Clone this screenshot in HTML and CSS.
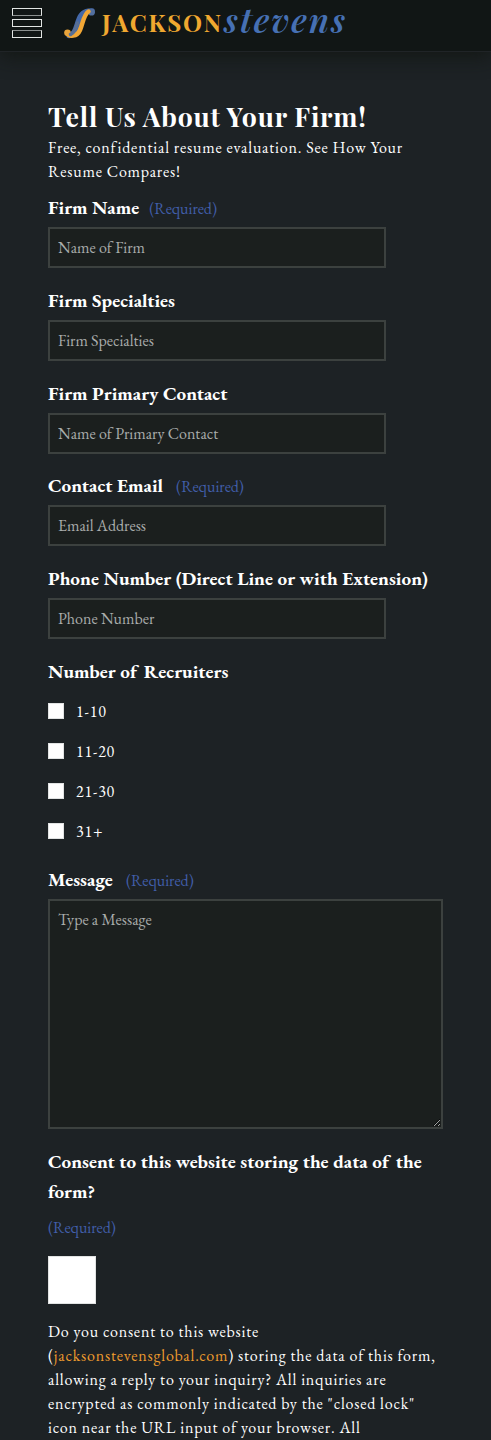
FILE: index.html
```html
<!DOCTYPE html>
<html lang="en">
<head>
<meta charset="utf-8">
<title>Jackson Stevens</title>
<link rel="stylesheet" href="styles.css">
</head>
<body>
<header class="header">
  <button class="menu" aria-label="Menu"><span class="bar"></span><span class="bar"></span><span class="bar"></span></button>
  <svg class="logo" width="300" height="48" viewBox="62 0 300 48" role="img" aria-label="Jackson Stevens">
    <path d="M69 35.500C75 35 76 28 78.500 21C80.500 14 84 10.500 92 11" fill="none" stroke="#4468a8" stroke-width="5.500" stroke-linecap="round"/>
    <circle cx="91.500" cy="12.200" r="3.400" fill="#526f9f"/>
    <path d="M67 33C69 37 77 37 80 30C83 23 83.500 15 88.500 11.500" fill="none" stroke="#f2a735" stroke-width="4.500" stroke-linecap="round"/>
    <circle cx="67.500" cy="32.800" r="3.300" fill="#e9a43b"/>
    <path d="M70.500 34.500C74.500 33 76 28 77.500 23" fill="none" stroke="#586f95" stroke-width="3.500" stroke-linecap="round"/>
    <text class="logo-first" x="102" y="32" textLength="119" lengthAdjust="spacing">JACKSON</text>
    <text class="logo-second" x="224" y="32.500" textLength="121" lengthAdjust="spacing">stevens</text>
  </svg>
</header>
<main class="content">
  <h1 class="title">Tell Us About Your Firm!</h1>
  <p class="copy intro">Free, confidential resume evaluation. See How Your<br>Resume Compares!</p>
  <form class="form">
    <div class="field">
      <label class="label" for="firm">Firm Name</label><span class="required near">(Required)</span>
      <input class="input" id="firm" placeholder="Name of Firm">
    </div>
    <div class="field">
      <label class="label" for="spec">Firm Specialties</label>
      <input class="input" id="spec" placeholder="Firm Specialties">
    </div>
    <div class="field">
      <label class="label" for="contact">Firm Primary Contact</label>
      <input class="input" id="contact" placeholder="Name of Primary Contact">
    </div>
    <div class="field">
      <label class="label" for="email">Contact Email</label><span class="required">(Required)</span>
      <input class="input" id="email" placeholder="Email Address">
    </div>
    <div class="field">
      <label class="label" for="phone">Phone Number (Direct Line or with Extension)</label>
      <input class="input" id="phone" placeholder="Phone Number">
    </div>
    <div class="group">
      <div class="label">Number <span class="gap">of</span> Recruiters</div>
      <label class="option"><input class="check" type="checkbox"><span class="option-text">1-10</span></label>
      <label class="option"><input class="check" type="checkbox"><span class="option-text">11-20</span></label>
      <label class="option"><input class="check" type="checkbox"><span class="option-text">21-30</span></label>
      <label class="option"><input class="check" type="checkbox"><span class="option-text">31+</span></label>
    </div>
    <div class="message">
      <label class="label" for="msg">Message</label><span class="required">(Required)</span>
      <textarea class="input area" id="msg" placeholder="Type a Message"></textarea>
    </div>
    <div class="label consent-title">Consent to this website storing the data <span class="gap">of</span> the<br>form?</div>
    <div class="required below">(Required)</div>
    <input class="check big" type="checkbox" aria-label="Consent">
    <p class="copy">Do you consent to this website<br>(<a class="link">jacksonstevensglobal.com</a>) storing the data of this form,<br>allowing a reply to your inquiry? All inquiries are<br>encrypted as commonly indicated by the "closed lock"<br>icon near the URL input of your browser. All</p>
  </form>
</main>
</body>
</html>
```
FILE: styles.css
```css
* { box-sizing: border-box; }
body {
  margin: 0;
  height: 1440px;
  overflow: hidden;
  background: #1d2225;
  color: #fff;
  font-family: "EB Garamond", "Liberation Serif", serif;
  font-size: 16px;
}
.header {
  display: flex;
  align-items: flex-start;
  height: 52px;
  padding-left: 12px;
  background: #111615;
  border-bottom: 1px solid #202427;
  box-shadow: 0 4px 20px rgba(16, 20, 15, .8);
}
.menu {
  display: flex;
  flex-direction: column;
  gap: 3px;
  width: 30px;
  margin: 8px 20px 0 0;
  padding: 0;
  border: 0;
  background: none;
}
.bar { height: 8px; border: 1px solid #e2e5e3; }
.bar:nth-child(1) { border-bottom-color: #8b8f8e; }
.bar:nth-child(3) { border-top-color: #8b8f8e; }
.logo { flex: none; overflow: visible; }
.logo-first {
  fill: #f0a830;
  font: bold 24px "Playfair Display", "Liberation Serif", serif;
}
.logo-second {
  fill: #4670b3;
  font: italic 600 34px "Playfair Display", "Liberation Serif", serif;
}
.content { padding: 49px 48px 0; white-space: nowrap; }
.title {
  margin: 0;
  padding-bottom: 5px;
  font: bold 26.66px/30px "Playfair Display", "Liberation Serif", serif;
  letter-spacing: .8px;
}
.copy { margin: 0; line-height: 24px; letter-spacing: .8px; }
.intro { margin-bottom: 9px; }
.field { height: 92.75px; }
.label {
  display: inline-block;
  font-size: 19.2px;
  font-weight: bold;
  line-height: 30px;
}
.gap { padding-right: 2.4px; }
.required {
  margin-left: 13px;
  color: #415ea9;
}
.required.near { margin-left: 10px; }
.required.below { margin: 9px 0 16px; line-height: 24px; }
.input {
  display: block;
  width: 338px;
  height: 41px;
  margin: 4px 0 0;
  padding: 0 8px;
  border: 2px solid #3c413f;
  border-radius: 0;
  background: #1b1f1e;
  color: #fff;
  font: 16px "EB Garamond", "Liberation Serif", serif;
}
.input::placeholder { color: #a9acab; opacity: 1; }
.group .label { display: block; margin-bottom: 4px; }
.option {
  display: flex;
  align-items: center;
  gap: 12px;
  height: 40px;
  letter-spacing: .8px;
}
.option-text { padding-top: 2px; }
.check {
  appearance: none;
  width: 16px;
  height: 16px;
  margin: 0;
  border: 1px solid #e1e3e3;
  background: #fff;
}
.message { margin-top: 14px; }
.area {
  width: 395px;
  height: 230px;
  padding: 8px;
}
.consent-title { display: block; margin-top: 18px; }
.check.big { display: block; width: 48px; height: 48px; margin-bottom: 16px; }
.link { color: #ee9c2e; }
```
